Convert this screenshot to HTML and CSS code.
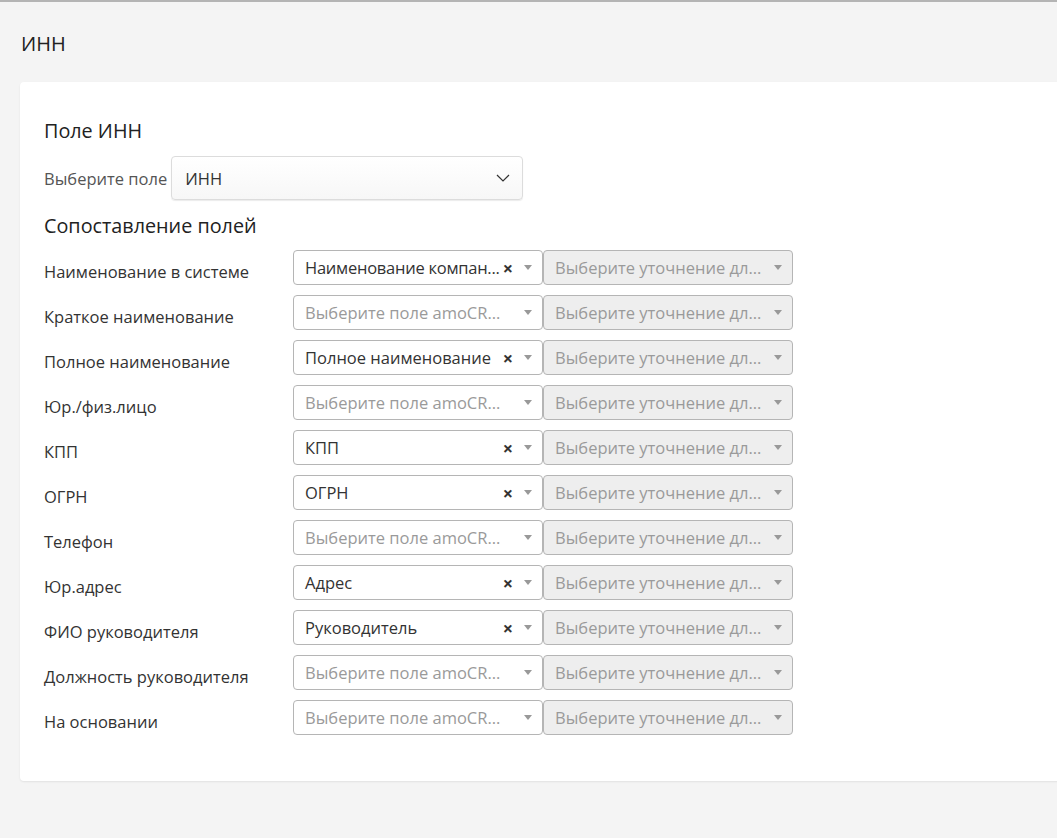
FILE: index.html
```html
<!DOCTYPE html>
<html lang="ru">
<head>
<meta charset="utf-8">
<link rel="stylesheet" href="styles.css">
</head>
<body>
<div class="page">
  <h1 class="page-title">ИНН</h1>
  <div class="card">
    <h2 class="section-title">Поле ИНН</h2>
    <div class="field-row">
      <span class="field-label">Выберите поле</span>
      <div class="big-select">
        <span>ИНН</span>
        <svg class="chev" width="14" height="8" viewBox="0 0 14 8"><path d="M1 1l6 6 6-6" fill="none" stroke="#333" stroke-width="1.2"/></svg>
      </div>
    </div>
    <h2 class="section-title second">Сопоставление полей</h2>
    <div class="map">
      <div class="map-row">
        <span class="map-label">Наименование в системе</span>
        <div class="sel"><span class="val tight">Наименование компан...</span><span class="clr">×</span><span class="arr"></span></div>
        <div class="sel dis"><span class="ph">Выберите уточнение дл...</span><span class="arr"></span></div>
      </div>
      <div class="map-row">
        <span class="map-label">Краткое наименование</span>
        <div class="sel"><span class="ph">Выберите поле amoCR...</span><span class="arr"></span></div>
        <div class="sel dis"><span class="ph">Выберите уточнение дл...</span><span class="arr"></span></div>
      </div>
      <div class="map-row">
        <span class="map-label">Полное наименование</span>
        <div class="sel"><span class="val">Полное наименование</span><span class="clr">×</span><span class="arr"></span></div>
        <div class="sel dis"><span class="ph">Выберите уточнение дл...</span><span class="arr"></span></div>
      </div>
      <div class="map-row">
        <span class="map-label">Юр./физ.лицо</span>
        <div class="sel"><span class="ph">Выберите поле amoCR...</span><span class="arr"></span></div>
        <div class="sel dis"><span class="ph">Выберите уточнение дл...</span><span class="arr"></span></div>
      </div>
      <div class="map-row">
        <span class="map-label">КПП</span>
        <div class="sel"><span class="val">КПП</span><span class="clr">×</span><span class="arr"></span></div>
        <div class="sel dis"><span class="ph">Выберите уточнение дл...</span><span class="arr"></span></div>
      </div>
      <div class="map-row">
        <span class="map-label">ОГРН</span>
        <div class="sel"><span class="val">ОГРН</span><span class="clr">×</span><span class="arr"></span></div>
        <div class="sel dis"><span class="ph">Выберите уточнение дл...</span><span class="arr"></span></div>
      </div>
      <div class="map-row">
        <span class="map-label">Телефон</span>
        <div class="sel"><span class="ph">Выберите поле amoCR...</span><span class="arr"></span></div>
        <div class="sel dis"><span class="ph">Выберите уточнение дл...</span><span class="arr"></span></div>
      </div>
      <div class="map-row">
        <span class="map-label">Юр.адрес</span>
        <div class="sel"><span class="val">Адрес</span><span class="clr">×</span><span class="arr"></span></div>
        <div class="sel dis"><span class="ph">Выберите уточнение дл...</span><span class="arr"></span></div>
      </div>
      <div class="map-row">
        <span class="map-label">ФИО руководителя</span>
        <div class="sel"><span class="val">Руководитель</span><span class="clr">×</span><span class="arr"></span></div>
        <div class="sel dis"><span class="ph">Выберите уточнение дл...</span><span class="arr"></span></div>
      </div>
      <div class="map-row">
        <span class="map-label">Должность руководителя</span>
        <div class="sel"><span class="ph">Выберите поле amoCR...</span><span class="arr"></span></div>
        <div class="sel dis"><span class="ph">Выберите уточнение дл...</span><span class="arr"></span></div>
      </div>
      <div class="map-row">
        <span class="map-label">На основании</span>
        <div class="sel"><span class="ph">Выберите поле amoCR...</span><span class="arr"></span></div>
        <div class="sel dis"><span class="ph">Выберите уточнение дл...</span><span class="arr"></span></div>
      </div>
    </div>
  </div>
</div>
</body>
</html>
```

FILE: styles.css
```css
* { box-sizing: border-box; }
html, body { margin: 0; padding: 0; }
body {
  background: #f4f4f4;
  border-top: 2px solid #b4b4b4;
  font-family: "Open Sans", "Noto Sans", sans-serif;
  color: #333;
  height: 838px;
  overflow: hidden;
}
.page { padding: 0 0 0 20px; }
.page-title {
  margin: 0;
  padding: 30px 0 0 1px;
  height: 80px;
  font-size: 20px;
  font-weight: 400;
  line-height: 24px;
  color: #222;
}
.card {
  background: #fff;
  width: 1060px;
  border-radius: 4px 0 0 4px;
  box-shadow: 0 1px 2px rgba(0,0,0,0.08);
  padding: 37px 0 46px 24px;
}
.section-title {
  margin: 0;
  font-size: 19.8px;
  font-weight: 400;
  line-height: 24px;
  color: #222;
}
.section-title.second { margin-top: 14px; }
.field-row {
  display: flex;
  align-items: center;
  margin-top: 13px;
}
.field-label {
  font-size: 16.5px;
  color: #555;
  margin-right: 4px;
}
.big-select {
  width: 352px;
  height: 44px;
  border: 1px solid #dcdcdc;
  border-radius: 4px;
  background: linear-gradient(#fff, #f7f7f7);
  box-shadow: 0 1px 1px rgba(0,0,0,0.08);
  display: flex;
  align-items: center;
  justify-content: space-between;
  padding: 0 12px 0 13px;
  font-size: 16.5px;
  color: #333;
}
.map { margin-top: 12px; display: flex; flex-direction: column; gap: 10px; }
.map-row {
  display: grid;
  grid-template-columns: 249px 250px 250px;
  height: 35px;
}
.map-label {
  font-size: 16.5px;
  line-height: 20px;
  color: #333;
  padding-top: 12px;
  white-space: nowrap;
}
.sel {
  height: 35px;
  border: 1px solid #b5b5b5;
  border-radius: 4px;
  display: flex;
  align-items: center;
  padding: 0 10px 0 11px;
  font-size: 16.5px;
  background: #fff;
}
.sel.dis { background: #eee; }
.val { color: #333; flex: 1; white-space: nowrap; }
.val.tight { letter-spacing: -0.25px; }
.ph { color: #9a9a9a; flex: 1; white-space: nowrap; overflow: hidden; }
.clr {
  font-size: 18px;
  font-weight: 700;
  color: #333;
  margin: 0 7px 0 0;
  line-height: 1;
}
.arr {
  width: 0; height: 0;
  border-left: 4px solid transparent;
  border-right: 4px solid transparent;
  border-top: 5px solid #999;
  margin-left: 4px;
}
```
